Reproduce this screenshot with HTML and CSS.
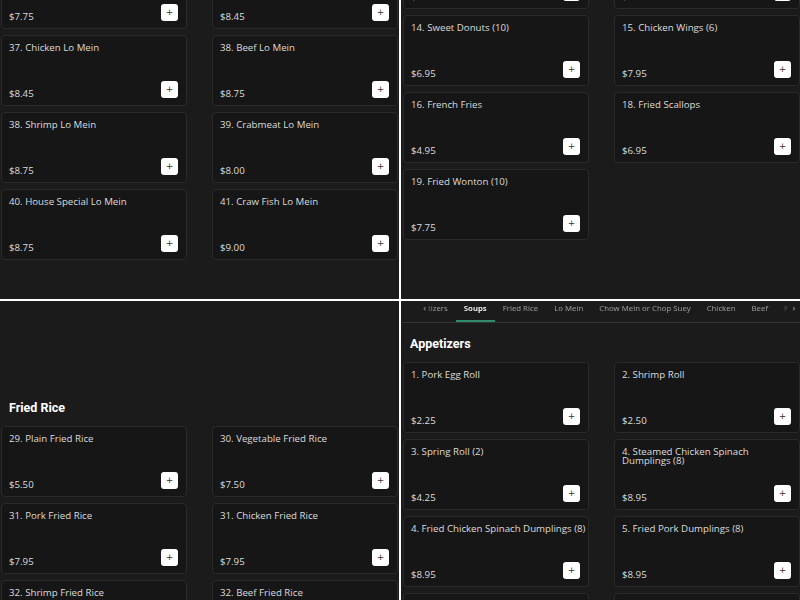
FILE: index.html
```html
<!DOCTYPE html>
<html lang="en">
<head>
    <meta charset="UTF-8">
    <title>Menu</title>
    <link rel="stylesheet" href="styles.css">
</head>
<body>
    <div class="board">

        <!-- lo mein, scrolled -->
        <section class="pane pane-left">
            <div class="menu-grid scroll-lomein">
                <div class="card"><p class="item-name">35. Plain Lo Mein</p><div class="item-foot"><span class="price">$7.75</span><button class="add-btn">+</button></div></div>
                <div class="card"><p class="item-name">36. Pork Lo Mein</p><div class="item-foot"><span class="price">$8.45</span><button class="add-btn">+</button></div></div>
                <div class="card"><p class="item-name">37. Chicken Lo Mein</p><div class="item-foot"><span class="price">$8.45</span><button class="add-btn">+</button></div></div>
                <div class="card"><p class="item-name">38. Beef Lo Mein</p><div class="item-foot"><span class="price">$8.75</span><button class="add-btn">+</button></div></div>
                <div class="card"><p class="item-name">38. Shrimp Lo Mein</p><div class="item-foot"><span class="price">$8.75</span><button class="add-btn">+</button></div></div>
                <div class="card"><p class="item-name">39. Crabmeat Lo Mein</p><div class="item-foot"><span class="price">$8.00</span><button class="add-btn">+</button></div></div>
                <div class="card"><p class="item-name">40. House Special Lo Mein</p><div class="item-foot"><span class="price">$8.75</span><button class="add-btn">+</button></div></div>
                <div class="card"><p class="item-name">41. Craw Fish Lo Mein</p><div class="item-foot"><span class="price">$9.00</span><button class="add-btn">+</button></div></div>
            </div>
        </section>

        <!-- appetizers, end of list -->
        <section class="pane pane-right">
            <div class="menu-grid scroll-appetizers">
                <div class="card"><p class="item-name">12. Crab Rangoon (8)</p><div class="item-foot"><span class="price">$6.95</span><button class="add-btn">+</button></div></div>
                <div class="card"><p class="item-name">13. Teriyaki Chicken (4)</p><div class="item-foot"><span class="price">$7.95</span><button class="add-btn">+</button></div></div>
                <div class="card"><p class="item-name">14. Sweet Donuts (10)</p><div class="item-foot"><span class="price">$6.95</span><button class="add-btn">+</button></div></div>
                <div class="card"><p class="item-name">15. Chicken Wings (6)</p><div class="item-foot"><span class="price">$7.95</span><button class="add-btn">+</button></div></div>
                <div class="card"><p class="item-name">16. French Fries</p><div class="item-foot"><span class="price">$4.95</span><button class="add-btn">+</button></div></div>
                <div class="card"><p class="item-name">18. Fried Scallops</p><div class="item-foot"><span class="price">$6.95</span><button class="add-btn">+</button></div></div>
                <div class="card"><p class="item-name">19. Fried Wonton (10)</p><div class="item-foot"><span class="price">$7.75</span><button class="add-btn">+</button></div></div>
            </div>
        </section>

        <!-- fried rice -->
        <section class="pane pane-left">
            <div class="menu-section scroll-rice">
                <h2 class="section-title">Fried Rice</h2>
                <div class="menu-grid">
                    <div class="card"><p class="item-name">29. Plain Fried Rice</p><div class="item-foot"><span class="price">$5.50</span><button class="add-btn">+</button></div></div>
                    <div class="card"><p class="item-name">30. Vegetable Fried Rice</p><div class="item-foot"><span class="price">$7.50</span><button class="add-btn">+</button></div></div>
                    <div class="card"><p class="item-name">31. Pork Fried Rice</p><div class="item-foot"><span class="price">$7.95</span><button class="add-btn">+</button></div></div>
                    <div class="card"><p class="item-name">31. Chicken Fried Rice</p><div class="item-foot"><span class="price">$7.95</span><button class="add-btn">+</button></div></div>
                    <div class="card"><p class="item-name">32. Shrimp Fried Rice</p><div class="item-foot"><span class="price">$8.45</span><button class="add-btn">+</button></div></div>
                    <div class="card"><p class="item-name">32. Beef Fried Rice</p><div class="item-foot"><span class="price">$8.45</span><button class="add-btn">+</button></div></div>
                </div>
            </div>
        </section>

        <!-- top of page with tabs -->
        <section class="pane pane-right">
            <nav class="tab-bar">
                <span class="tab-arrow tab-arrow-left">&lsaquo;</span>
                <div class="tab-view">
                    <div class="tab-list">
                        <a class="tab">Appetizers</a>
                        <a class="tab active">Soups</a>
                        <a class="tab">Fried Rice</a>
                        <a class="tab">Lo Mein</a>
                        <a class="tab">Chow Mein or Chop Suey</a>
                        <a class="tab">Chicken</a>
                        <a class="tab">Beef</a>
                        <a class="tab">Pork</a>
                    </div>
                </div>
                <span class="tab-arrow tab-arrow-right">&rsaquo;</span>
            </nav>
            <div class="menu-section">
                <h2 class="section-title section-title-top">Appetizers</h2>
                <div class="menu-grid">
                    <div class="card"><p class="item-name">1. Pork Egg Roll</p><div class="item-foot"><span class="price">$2.25</span><button class="add-btn">+</button></div></div>
                    <div class="card"><p class="item-name">2. Shrimp Roll</p><div class="item-foot"><span class="price">$2.50</span><button class="add-btn">+</button></div></div>
                    <div class="card"><p class="item-name">3. Spring Roll (2)</p><div class="item-foot"><span class="price">$4.25</span><button class="add-btn">+</button></div></div>
                    <div class="card"><p class="item-name">4. Steamed Chicken Spinach<br>Dumplings (8)</p><div class="item-foot"><span class="price">$8.95</span><button class="add-btn">+</button></div></div>
                    <div class="card"><p class="item-name">4. Fried Chicken Spinach Dumplings (8)</p><div class="item-foot"><span class="price">$8.95</span><button class="add-btn">+</button></div></div>
                    <div class="card"><p class="item-name">5. Fried Pork Dumplings (8)</p><div class="item-foot"><span class="price">$8.95</span><button class="add-btn">+</button></div></div>
                    <div class="card"><p class="item-name">6. Steamed Pork Dumplings (8)</p><div class="item-foot"><span class="price">$8.95</span><button class="add-btn">+</button></div></div>
                    <div class="card"><p class="item-name">7. Boneless Spare Ribs</p><div class="item-foot"><span class="price">$9.95</span><button class="add-btn">+</button></div></div>
                </div>
            </div>
        </section>

    </div>
</body>
</html>
```

FILE: styles.css
```css
body {
    margin: 0;
    background-color: #fff;
    font-family: "Open Sans", Arial, sans-serif;
}

.board {
    display: grid;
    grid-template-columns: 399px 399px;
    grid-template-rows: 299px 299px;
    gap: 2px;
    width: 800px;
    height: 600px;
    background-color: #fff;
}

.pane {
    background-color: #1b1b1b;
    overflow: hidden;
}

.menu-grid {
    display: grid;
    grid-template-columns: 186px 186px;
    grid-auto-rows: 71px;
    column-gap: 25px;
    row-gap: 6px;
}

.pane-left .menu-grid {
    padding-left: 1px;
}

.pane-right .menu-grid {
    padding-left: 2px;
}

/* scroll offsets of each capture */
.scroll-lomein {
    margin-top: -42px;
}

.scroll-appetizers {
    margin-top: -62px;
}

.scroll-rice {
    padding-top: 99px;
}

.card {
    box-sizing: border-box;
    display: flex;
    flex-direction: column;
    justify-content: space-between;
    padding: 6px 8px 7px 7px;
    background-color: #161616;
    border: 1px solid #2a2a2a;
    border-radius: 4px;
}

.item-name {
    margin: 0;
    font-size: 9.7px;
    line-height: 9px;
    color: #dcdcdc;
    padding-top: 1px;
    white-space: nowrap;
}

.item-foot {
    display: flex;
    justify-content: space-between;
    align-items: flex-end;
}

.price {
    font-size: 9.7px;
    line-height: 11px;
    color: #dcdcdc;
    margin-bottom: -1px;
}

.add-btn {
    width: 17px;
    height: 17px;
    padding: 0;
    border: none;
    border-radius: 3px;
    background-color: #fff;
    color: #333;
    font-family: "DejaVu Sans", sans-serif;
    font-size: 9px;
    line-height: 17px;
    cursor: pointer;
}

.section-title {
    margin: 0 0 10px 0;
    padding-left: 9px;
    font-family: Roboto, "Liberation Sans", sans-serif;
    font-weight: 700;
    font-size: 12.5px;
    line-height: 16px;
    color: #fff;
}

.section-title-top {
    margin-top: 13px;
}

/* category tabs */
.tab-bar {
    display: flex;
    border-bottom: 1px solid #333;
    font-family: "Noto Sans", sans-serif;
    font-size: 7.8px;
}

.tab-arrow {
    color: #aaa;
    font-size: 9px;
    line-height: 14px;
}

.tab-arrow-left {
    width: 27px;
    text-align: right;
    padding-right: 2px;
    box-sizing: border-box;
}

.tab-arrow-right {
    width: 12px;
    text-align: center;
}

.tab-view {
    flex: 1;
    overflow: hidden;
    -webkit-mask-image: linear-gradient(to right, rgba(0,0,0,0.5) 0, #000 6px, #000 calc(100% - 10px), rgba(0,0,0,0.2));
    mask-image: linear-gradient(to right, rgba(0,0,0,0.5) 0, #000 6px, #000 calc(100% - 10px), rgba(0,0,0,0.2));
}

.tab-list {
    display: flex;
    margin-left: -27px;
}

.tab {
    flex: none;
    padding: 2px 8px 7px 8px;
    line-height: 10px;
    color: #9a9a9a;
    border-bottom: 2px solid transparent;
    white-space: nowrap;
}

.tab.active {
    color: #fff;
    font-weight: 600;
    border-bottom-color: #2e8c6c;
}
```
